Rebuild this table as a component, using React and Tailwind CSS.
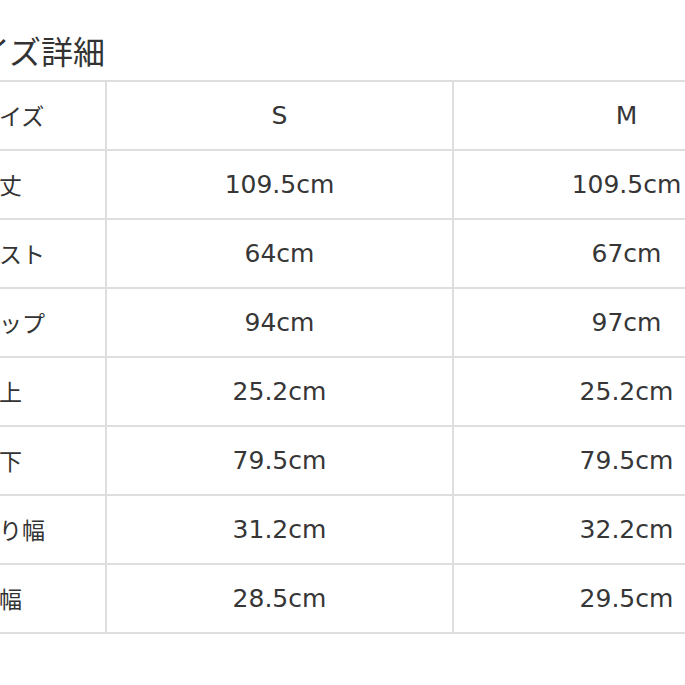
const rows = [
  ['着丈', '109.5cm', '109.5cm'],
  ['バスト', '64cm', '67cm'],
  ['ヒップ', '94cm', '97cm'],
  ['股上', '25.2cm', '25.2cm'],
  ['股下', '79.5cm', '79.5cm'],
  ['渡り幅', '31.2cm', '32.2cm'],
  ['裾幅', '28.5cm', '29.5cm'],
]

const jp = "font-['Noto_Sans_CJK_JP',sans-serif]"
const num = "font-['DejaVu_Sans','Liberation_Sans',sans-serif]"

// one table row: label cell + S + M
const Row = ({ label, s, m, first }) => (
  <div className={`grid grid-cols-[187px_347px_347px] border-b-2 border-[#dedede] ${first ? 'border-t-2 h-[71px]' : 'h-[69px]'}`}>
    <div className={`flex items-center pl-[56px] border-r-2 border-[#dedede] text-[23px] text-[#333] ${jp}`}>
      {label}
    </div>
    <div className={`flex items-center justify-center border-r-2 border-[#dedede] text-[25px] text-[#363636] ${num}`}>
      {s}
    </div>
    <div className={`flex items-center justify-center border-r-2 border-[#dedede] text-[25px] text-[#363636] ${num}`}>
      {m}
    </div>
  </div>
)

export default function App() {
  return (
    <div className="w-[685px] h-[685px] overflow-hidden bg-white">
      <div className="ml-[-80px] pt-[34px] w-[900px]">
        <h2 className={`pl-[26px] text-[32px] leading-none text-[#333] mb-[14px] ${jp}`}>サイズ詳細</h2>
        <div>
          <Row label="サイズ" s="S" m="M" first />
          {rows.map(([label, s, m]) => (
            <Row key={label} label={label} s={s} m={m} />
          ))}
        </div>
      </div>
    </div>
  )
}
